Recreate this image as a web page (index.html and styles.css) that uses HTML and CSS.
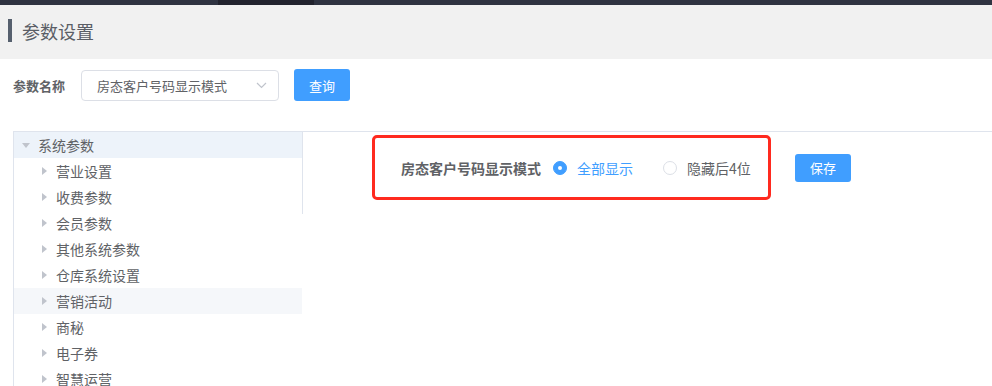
FILE: index.html
```html
<!DOCTYPE html>
<html lang="zh-CN">
<head>
    <meta charset="UTF-8">
    <title>参数设置</title>
    <link rel="stylesheet" href="styles.css">
</head>
<body>
    <div class="topbar">
        <div class="topbarActive"></div>
    </div>

    <div class="pageHead">
        <span class="headMark"></span>
        <h2 class="headTitle">参数设置</h2>
    </div>

    <div class="searchRow">
        <label class="searchLabel">参数名称</label>
        <div class="select">
            <span>房态客户号码显示模式</span>
            <svg class="chevron" width="11" height="7" viewBox="0 0 11 7">
                <polyline points="1,1 5.5,5.5 10,1" fill="none" stroke="#c0c4cc" stroke-width="1.2"/>
            </svg>
        </div>
        <button class="btn">查询</button>
    </div>

    <div class="main">
        <div class="tree">
            <div class="treeRow treeRoot">
                <span class="caretDown"></span>系统参数
            </div>
            <div class="treeRow treeChild"><span class="caretRight"></span>营业设置</div>
            <div class="treeRow treeChild"><span class="caretRight"></span>收费参数</div>
            <div class="treeRow treeChild"><span class="caretRight"></span>会员参数</div>
            <div class="treeRow treeChild"><span class="caretRight"></span>其他系统参数</div>
            <div class="treeRow treeChild"><span class="caretRight"></span>仓库系统设置</div>
            <div class="treeRow treeChild treeHover"><span class="caretRight"></span>营销活动</div>
            <div class="treeRow treeChild"><span class="caretRight"></span>商秘</div>
            <div class="treeRow treeChild"><span class="caretRight"></span>电子券</div>
            <div class="treeRow treeChild"><span class="caretRight"></span>智慧运营</div>
        </div>

        <div class="content">
            <div class="formLine">
                <div class="markBox">
                    <span class="formLabel">房态客户号码显示模式</span>
                    <label class="radio radioOn"><span class="radioDot"></span>全部显示</label>
                    <label class="radio"><span class="radioDot"></span>隐藏后4位</label>
                </div>
                <button class="btn btnSave">保存</button>
            </div>
        </div>
    </div>
</body>
</html>
```

FILE: styles.css
```css
body{
    margin: 0;
    padding: 0;
    font-family: "Noto Sans CJK SC", "Liberation Sans", sans-serif;
    color: #606266;
    background: #fff;
    overflow: hidden;
}

.topbar{
    height: 5px;
    background-color: #2f3341;
    display: flex;
}

.topbarActive{
    margin-left: 218px;
    width: 96px;
    background-color: #22232e;
}

.pageHead{
    box-sizing: border-box;
    height: 54px;
    background-color: #f1f1f1;
    display: flex;
    align-items: center;
    padding-left: 8px;
    padding-bottom: 3px;
}

.headMark{
    width: 4px;
    height: 23px;
    background-color: #56606e;
}

.headTitle{
    margin: 0 0 0 10px;
    font-size: 18px;
    font-weight: normal;
    color: #5a5e66;
}

.searchRow{
    display: flex;
    align-items: center;
    padding: 10px 13px 0 13px;
    margin-bottom: 30px;
}

.searchLabel{
    width: 68px;
    font-size: 13px;
    font-weight: bold;
    color: #606266;
}

.select{
    box-sizing: border-box;
    width: 198px;
    height: 31px;
    border: 1px solid #dcdfe6;
    border-radius: 4px;
    display: flex;
    align-items: center;
    justify-content: space-between;
    padding: 0 11px 0 15px;
    font-size: 13px;
    color: #606266;
}

.btn{
    box-sizing: border-box;
    width: 56px;
    height: 32px;
    margin-left: 15px;
    border: none;
    border-radius: 3px;
    background-color: #409eff;
    color: #fff;
    font-family: "Noto Sans CJK SC", "Liberation Sans", sans-serif;
    font-size: 13px;
    cursor: pointer;
    flex-shrink: 0;
}

.main{
    margin-left: 13px;
    border-top: 1px solid #dfe4ed;
    display: flex;
    align-items: flex-start;
}

.tree{
    width: 288px;
    border-left: 1px solid #dfe4ed;
    padding-bottom: 20px;
}

.treeRow{
    height: 26px;
    display: flex;
    align-items: center;
    font-size: 14px;
    color: #606266;
    white-space: nowrap;
}

.treeRoot{
    background-color: #edf3fa;
    padding-left: 8px;
}

.treeChild{
    padding-left: 28px;
}

.treeHover{
    background-color: #f5f7fa;
}

.caretDown{
    width: 0;
    height: 0;
    border-left: 4px solid transparent;
    border-right: 4px solid transparent;
    border-top: 5px solid #c0c4cc;
    margin-right: 8px;
}

.caretRight{
    width: 0;
    height: 0;
    border-top: 4px solid transparent;
    border-bottom: 4px solid transparent;
    border-left: 5px solid #c0c4cc;
    margin-right: 9px;
}

.content{
    flex: 1;
    border-left: 1px solid #dfe4ed;
    padding: 3px 0 14px 69px;
}

.formLine{
    display: flex;
    align-items: center;
}

.markBox{
    box-sizing: border-box;
    width: 399px;
    height: 65px;
    border: 3px solid #ff2a1f;
    border-radius: 5px;
    display: flex;
    align-items: center;
    padding-left: 26px;
    white-space: nowrap;
    flex-shrink: 0;
}

.formLabel{
    font-size: 14px;
    font-weight: bold;
    color: #606266;
    margin-right: 12px;
}

.radio{
    display: flex;
    align-items: center;
    font-size: 14px;
    color: #606266;
    margin-right: 30px;
}

.radioDot{
    box-sizing: border-box;
    width: 14px;
    height: 14px;
    border: 1px solid #dcdfe6;
    border-radius: 50%;
    margin-right: 10px;
    background-color: #fff;
    flex-shrink: 0;
}

.radioOn{
    color: #409eff;
}

.radioOn .radioDot{
    border-color: #409eff;
    background-color: #409eff;
    display: flex;
    align-items: center;
    justify-content: center;
}

.radioOn .radioDot::after{
    content: "";
    width: 4px;
    height: 4px;
    border-radius: 50%;
    background-color: #fff;
}

.btnSave{
    height: 28px;
    margin-left: 24px;
}
```
